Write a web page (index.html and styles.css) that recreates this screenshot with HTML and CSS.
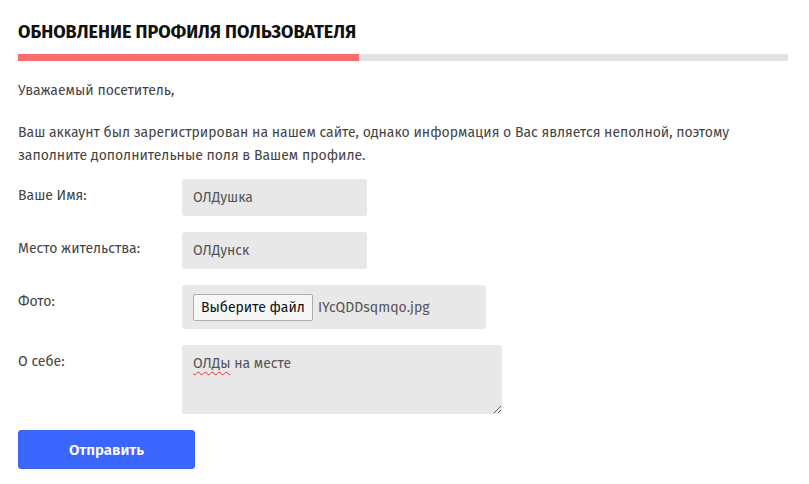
FILE: index.html
```html
<!DOCTYPE html>
<html lang="ru">
<head>
  <meta charset="UTF-8">
  <meta name="viewport" content="width=device-width, initial-scale=1.0">
  <title>Обновление профиля пользователя</title>
  <link rel="stylesheet" href="styles.css">
</head>
<body>
  <div class="page">
    <h1 class="title">Обновление профиля пользователя</h1>

    <div class="title-bar">
      <div class="title-bar-fill" style="width: 44.3%;"></div>
    </div>

    <p class="greeting">Уважаемый посетитель,</p>
    <p class="intro">Ваш аккаунт был зарегистрирован на нашем сайте, однако информация о Вас является неполной, поэтому заполните дополнительные поля в Вашем профиле.</p>

    <form class="profile-form">
      <div class="form-row">
        <label class="form-label" for="name">Ваше Имя:</label>
        <input class="form-input" id="name" type="text" value="ОЛДушка">
      </div>

      <div class="form-row">
        <label class="form-label" for="city">Место жительства:</label>
        <input class="form-input" id="city" type="text" value="ОЛДунск">
      </div>

      <div class="form-row">
        <span class="form-label">Фото:</span>
        <div class="file-field">
          <button class="file-btn" type="button">Выберите файл</button>
          <span class="file-name">IYcQDDsqmqo.jpg</span>
        </div>
      </div>

      <div class="form-row">
        <span class="form-label">О себе:</span>
        <div class="form-textarea"><span class="misspelled">ОЛДы</span> на месте</div>
      </div>

      <button class="submit-btn" type="button">Отправить</button>
    </form>
  </div>
</body>
</html>
```

FILE: styles.css
```css
body {
  margin: 0;
  background-color: #fff;
  font-family: 'Fira Sans', 'Open Sans', 'Noto Sans', sans-serif;
  font-size: 14px;
  color: #444;
}

.page {
  padding: 20px 21px 0 18px;
}

.title {
  margin: 0;
  font-size: 18px;
  line-height: 24px;
  font-weight: bold;
  text-transform: uppercase;
  color: #111;
}

.title-bar {
  height: 7px;
  margin-top: 10px;
  background-color: #e2e2e2;
}

.title-bar-fill {
  height: 100%;
  background-color: #fd6b6b;
}

.greeting,
.intro {
  margin: 0;
  line-height: 23px;
}

.greeting {
  margin-top: 18px;
}

.intro {
  margin-top: 19px;
}

.profile-form {
  margin-top: 12px;
  display: flex;
  flex-direction: column;
  gap: 16px;
}

.form-row {
  display: flex;
  align-items: flex-start;
}

.form-label {
  width: 164px;
  flex-shrink: 0;
  padding-top: 5px;
  line-height: 23px;
  color: #444;
}

.form-input {
  width: 185px;
  height: 37px;
  box-sizing: border-box;
  padding: 0 11px;
  border: none;
  border-radius: 3px;
  background-color: #e8e8e8;
  font-family: inherit;
  font-size: 14px;
  color: #555;
  outline: none;
}

.file-field {
  width: 304px;
  height: 44px;
  box-sizing: border-box;
  padding: 0 11px;
  display: flex;
  align-items: center;
  gap: 5px;
  border-radius: 3px;
  background-color: #e8e8e8;
}

.file-btn {
  height: 27px;
  padding: 0 7px;
  border: 1px solid #adadad;
  border-radius: 2px;
  background-color: #f7f7f7;
  font-family: inherit;
  font-size: 14px;
  color: #111;
}

.file-name {
  color: #555;
}

.form-textarea {
  width: 320px;
  height: 69px;
  box-sizing: border-box;
  padding: 7px 11px;
  border-radius: 3px;
  background-color: #e8e8e8;
  line-height: 23px;
  color: #555;
  overflow: auto;
  resize: both;
}

.misspelled {
  text-decoration: underline wavy #e0302a;
  text-decoration-thickness: 1px;
  text-underline-offset: 3px;
}

.submit-btn {
  width: 177px;
  height: 39px;
  border: 1px solid #3a62e8;
  border-radius: 3px;
  background-color: #3b66fd;
  font-family: inherit;
  font-size: 15px;
  font-weight: 600;
  color: #fff;
}
```
